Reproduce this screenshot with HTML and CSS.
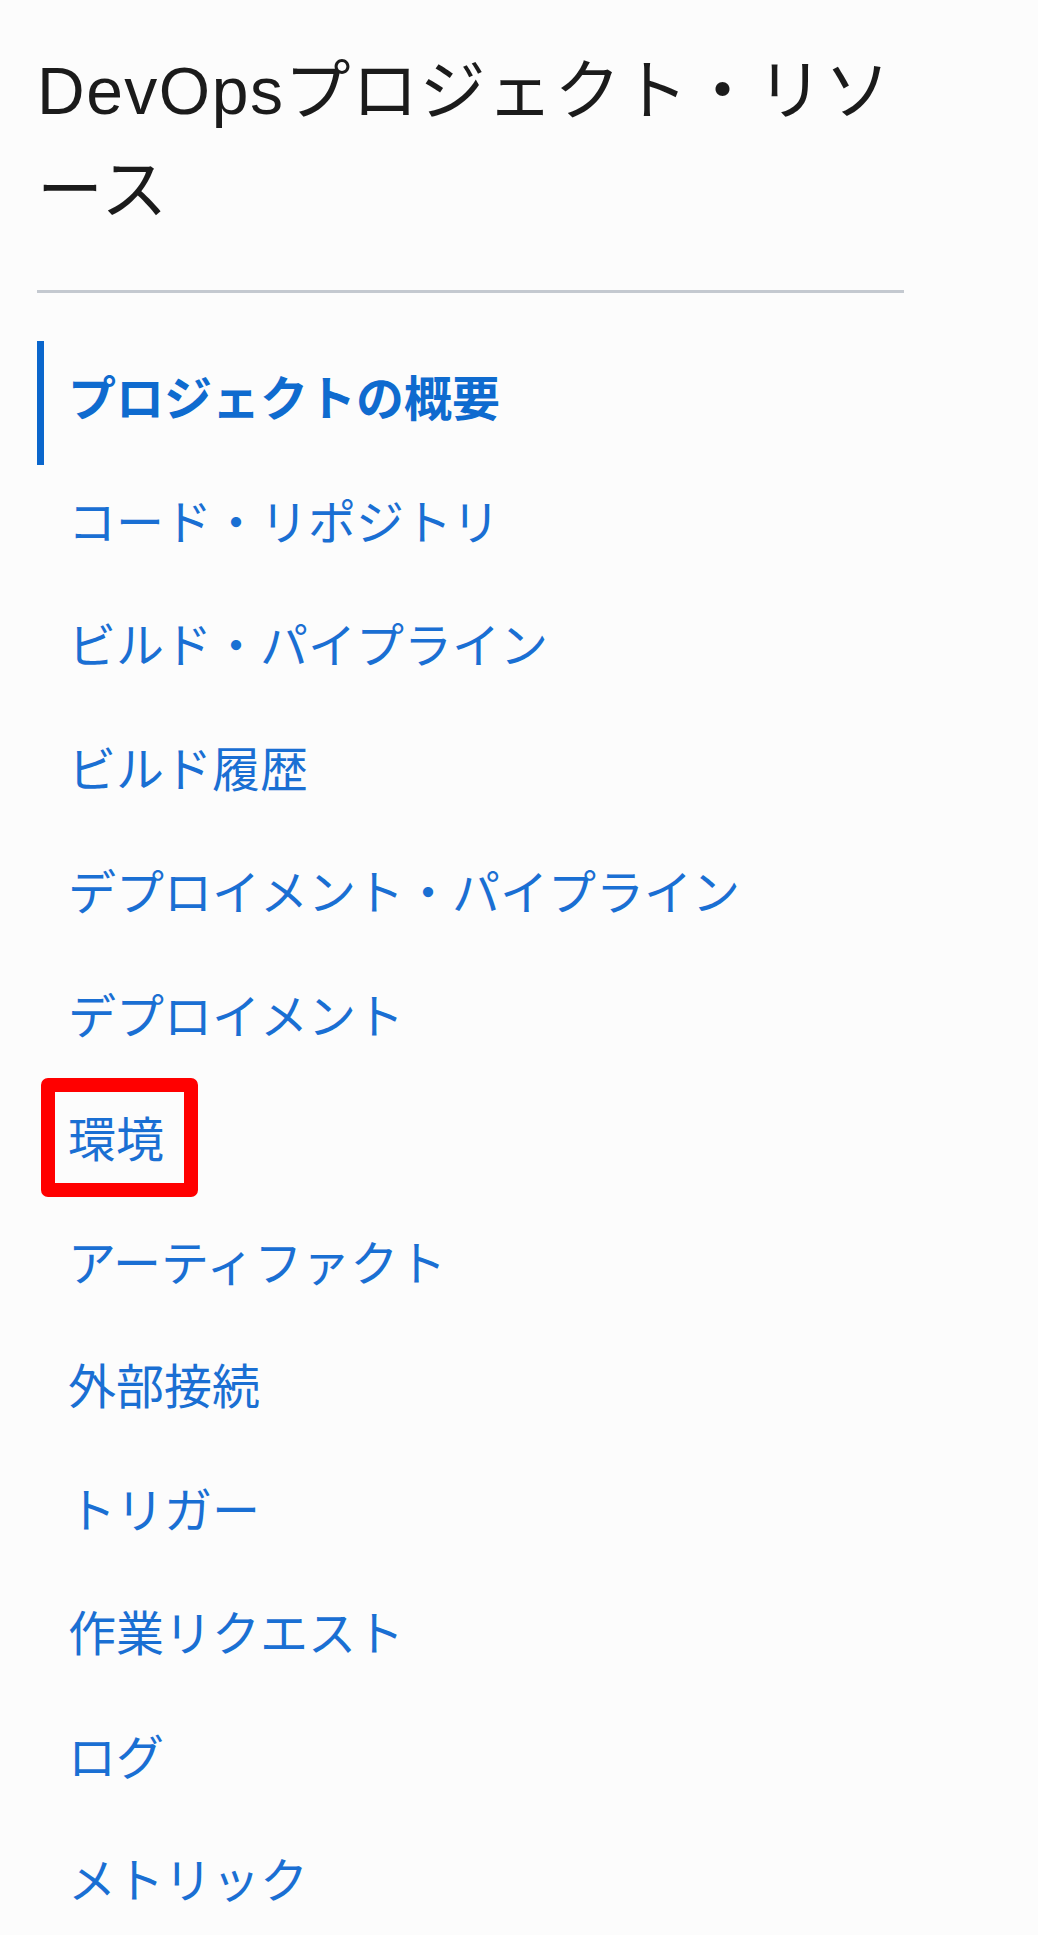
FILE: index.html
```html
<!DOCTYPE html>
<html lang="ja">
<head>
<meta charset="utf-8">
<title>DevOpsプロジェクト・リソース</title>
<link rel="stylesheet" href="styles.css">
</head>
<body>
<nav class="toc">
  <h2 class="toc-title">DevOpsプロジェクト・リソース</h2>
  <ul class="toc-list">
    <li class="toc-item is-active"><a href="#">プロジェクトの概要</a></li>
    <li class="toc-item"><a href="#">コード・リポジトリ</a></li>
    <li class="toc-item"><a href="#">ビルド・パイプライン</a></li>
    <li class="toc-item"><a href="#">ビルド履歴</a></li>
    <li class="toc-item"><a href="#">デプロイメント・パイプライン</a></li>
    <li class="toc-item"><a href="#">デプロイメント</a></li>
    <li class="toc-item is-marked"><a href="#">環境</a><span class="mark"></span></li>
    <li class="toc-item"><a href="#">アーティファクト</a></li>
    <li class="toc-item"><a href="#">外部接続</a></li>
    <li class="toc-item"><a href="#">トリガー</a></li>
    <li class="toc-item"><a href="#">作業リクエスト</a></li>
    <li class="toc-item"><a href="#">ログ</a></li>
    <li class="toc-item"><a href="#">メトリック</a></li>
  </ul>
</nav>
</body>
</html>
```

FILE: styles.css
```css
html, body {
  margin: 0;
  padding: 0;
  background: #fcfcfc;
}

body {
  font-family: "Liberation Sans", "Noto Sans CJK JP", sans-serif;
  padding: 42px 0 0 37px;
  overflow: hidden;
}

.toc {
  width: 867px;
}

.toc-title {
  margin: 0;
  padding: 0 0 50px;
  font-size: 66px;
  font-weight: 400;
  line-height: 1.5;
  letter-spacing: 1.5px;
  color: #1b1b1b;
  border-bottom: 3px solid #c4c9d0;
}

.toc-list {
  list-style: none;
  margin: 48px 0 0;
  padding: 0;
}

.toc-item {
  position: relative;
  box-sizing: border-box;
  height: 123.5px;
  border-left: 7px solid transparent;
  padding: 0 0 14px 24px;
  font-family: "Noto Sans CJK JP", sans-serif;
  font-size: 48px;
  line-height: 109px;
}

.toc-item a {
  color: #1a6fd3;
  text-decoration: none;
}

.toc-item.is-active {
  border-left-color: #0a66cc;
}

.toc-item.is-active a {
  font-weight: 700;
  color: #0f6bcf;
}

.mark {
  position: absolute;
  left: -3px;
  top: -4px;
  width: 157px;
  height: 119px;
  box-sizing: border-box;
  border: 14px solid #ff0000;
  border-radius: 7px;
}
```
